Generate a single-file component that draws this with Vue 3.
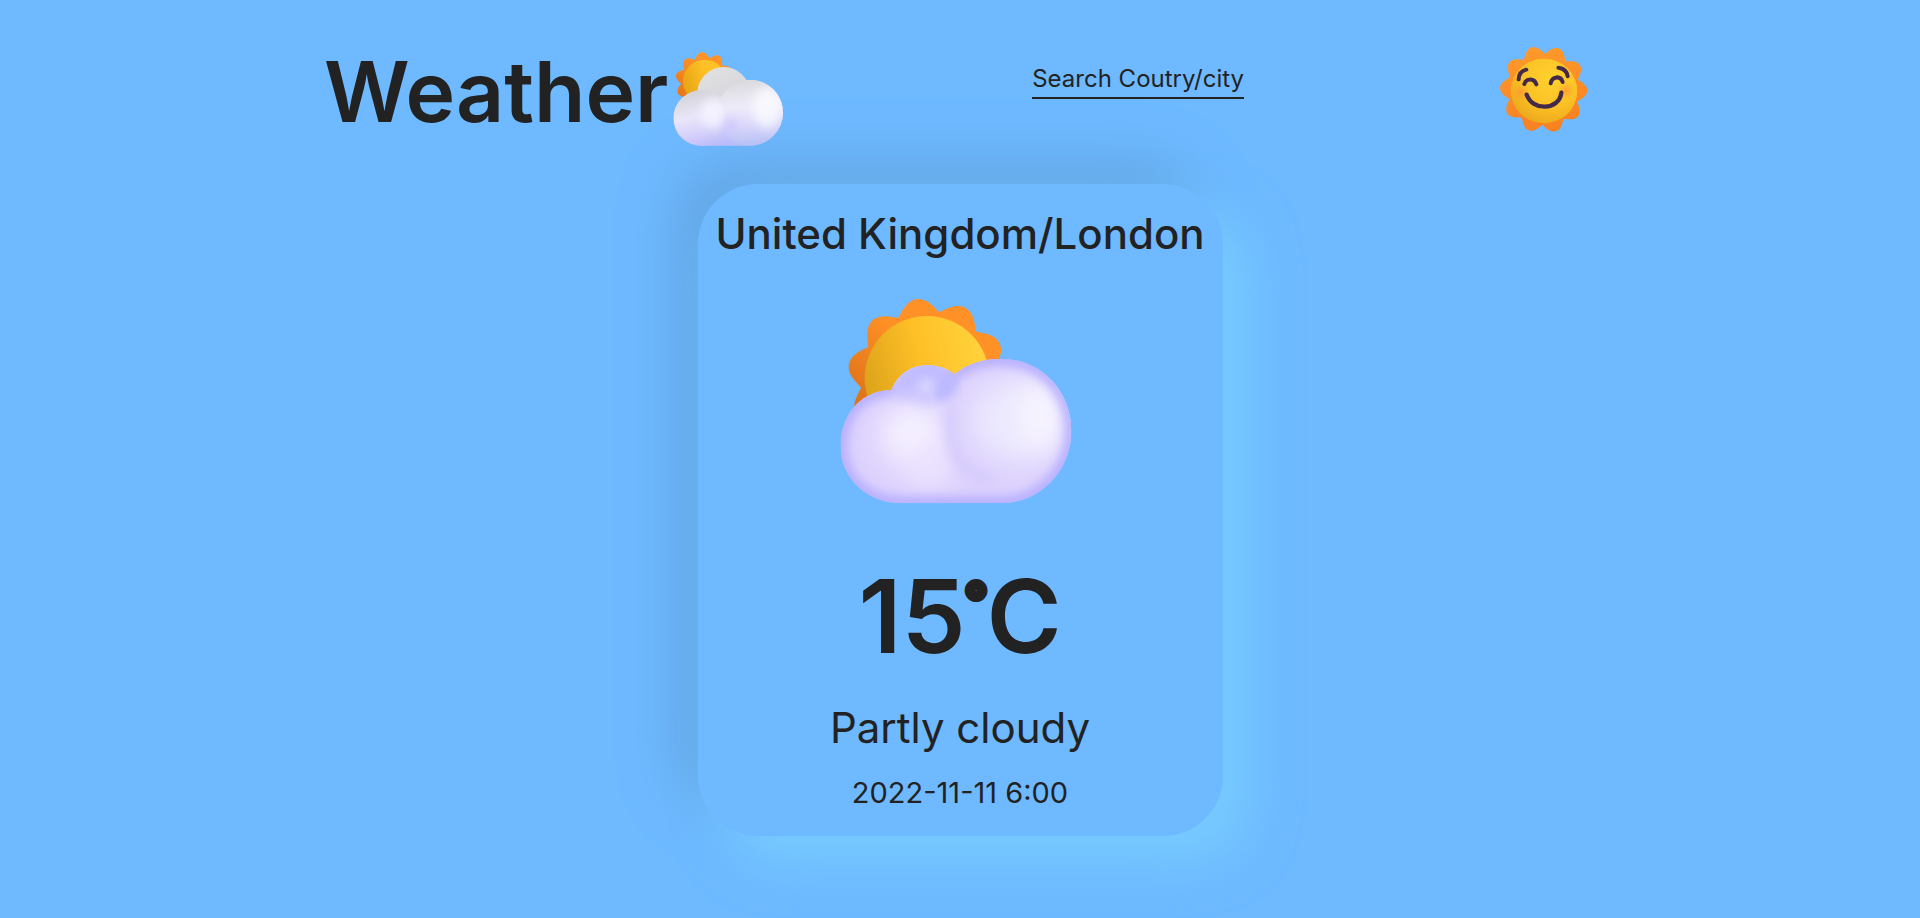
<script setup>
import { ref } from 'vue'

const query = ref('')

const weather = {
  place: 'United Kingdom/London',
  degrees: 15,
  condition: 'Partly cloudy',
  time: '2022-11-11 6:00',
}

// Ten rounded rays around a centre, as one closed outline.
function rays(cx, cy, valley, peak, turn) {
  const points = []
  for (let deg = 0; deg < 360; deg += 2) {
    const a = (deg * Math.PI) / 180
    const wave = 0.5 + 0.5 * Math.cos(10 * (a - (turn * Math.PI) / 180))
    const r = valley + (peak - valley) * Math.pow(wave, 0.6)
    points.push(`${(cx + r * Math.cos(a)).toFixed(1)} ${(cy + r * Math.sin(a)).toFixed(1)}`)
  }
  return `M${points.join('L')}Z`
}

const cardRays = rays(324, 295, 202, 240, -98)
const logoRays = rays(134, 124, 71, 88, -96)
const faceRays = rays(191, 178, 107, 131, 2)
</script>

<template>
  <div class="page">
    <header class="header">
      <h1 class="logo">
        <span>Weather</span>
        <svg class="logo-icon" viewBox="24 0 348 360" aria-hidden="true">
          <defs>
            <linearGradient id="lRay" x1="0" y1="1" x2="1" y2="0">
              <stop offset="0" stop-color="#e06c12" />
              <stop offset="0.6" stop-color="#ff9326" />
            </linearGradient>
            <linearGradient id="lSun" x1="0" y1="0.6" x2="1" y2="0.3">
              <stop offset="0" stop-color="#e6a516" />
              <stop offset="0.6" stop-color="#ffc226" />
            </linearGradient>
            <linearGradient id="lBack" x1="0" y1="0" x2="0.5" y2="1">
              <stop offset="0" stop-color="#e2e2e3" />
              <stop offset="0.6" stop-color="#d9d8dd" />
            </linearGradient>
            <linearGradient id="lLeft" gradientUnits="userSpaceOnUse" x1="95" y1="155" x2="130" y2="318">
              <stop offset="0" stop-color="#d3d3d8" />
              <stop offset="0.45" stop-color="#ebe7fa" />
              <stop offset="1" stop-color="#d3c4fd" />
            </linearGradient>
            <linearGradient id="lRight" gradientUnits="userSpaceOnUse" x1="235" y1="125" x2="260" y2="318">
              <stop offset="0" stop-color="#dbdbde" />
              <stop offset="0.4" stop-color="#efecfa" />
              <stop offset="1" stop-color="#d6c9fc" />
            </linearGradient>
            <clipPath id="lCloud">
              <circle cx="124" cy="234" r="84" />
              <circle cx="270" cy="218" r="99" />
              <rect x="122" y="230" width="150" height="87" />
            </clipPath>
            <filter id="lBlur" x="-80%" y="-80%" width="260%" height="260%">
              <feGaussianBlur stdDeviation="14" />
            </filter>
            <filter id="lEdge" x="-20%" y="-20%" width="140%" height="140%">
              <feGaussianBlur stdDeviation="5" />
            </filter>
          </defs>
          <path :d="logoRays" fill="url(#lRay)" />
          <circle cx="134" cy="124" r="65" fill="url(#lSun)" />
          <circle cx="191" cy="160" r="79" fill="url(#lBack)" />
          <g clip-path="url(#lCloud)">
            <rect x="30" y="110" width="350" height="220" fill="url(#lLeft)" />
            <ellipse cx="160" cy="222" rx="38" ry="44" fill="#f6f3fe" filter="url(#lBlur)" />
            <path d="M188 150Q182 190 202 240Q196 270 214 300L300 340L400 220L300 90Z" fill="url(#lRight)" filter="url(#lEdge)" />
            <ellipse cx="212" cy="255" rx="16" ry="24" fill="#d0c3fc" opacity="0.8" filter="url(#lBlur)" />
            <ellipse cx="322" cy="205" rx="44" ry="60" fill="#faf8fe" filter="url(#lBlur)" />
          </g>
        </svg>
      </h1>

      <form class="search" @submit.prevent>
        <input
          v-model="query"
          class="search-input"
          type="text"
          aria-label="Search Coutry/city"
          placeholder="Search Coutry/city"
        />
      </form>

      <svg class="face" viewBox="36 30 300 300" aria-hidden="true">
        <defs>
          <linearGradient id="fRay" x1="0.3" y1="0" x2="0.5" y2="1">
            <stop offset="0" stop-color="#ff9a2c" />
            <stop offset="1" stop-color="#f88020" />
          </linearGradient>
          <radialGradient id="fSun" cx="0.62" cy="0.3" r="0.8">
            <stop offset="0" stop-color="#ffd22f" />
            <stop offset="0.55" stop-color="#fbc125" />
            <stop offset="1" stop-color="#e9a31d" />
          </radialGradient>
          <radialGradient id="fCheek">
            <stop offset="0" stop-color="#ff8a35" stop-opacity="0.65" />
            <stop offset="1" stop-color="#ff9a35" stop-opacity="0" />
          </radialGradient>
        </defs>
        <path :d="faceRays" fill="url(#fRay)" />
        <ellipse cx="192" cy="183" rx="100" ry="97" fill="url(#fSun)" />
        <circle cx="123" cy="187" r="27" fill="url(#fCheek)" />
        <circle cx="258" cy="182" r="27" fill="url(#fCheek)" />
        <g fill="none" stroke="#44294a" stroke-width="12" stroke-linecap="round">
          <path d="M116 148Q117 124 139 119" />
          <path d="M235 113Q260 116 263 139" />
          <path d="M133 162C138 144 163 144 169 163" />
          <path d="M212 160C216 138 242 136 248 156" />
          <path d="M140 194C156 243 237 243 244 188" stroke-width="13" />
        </g>
      </svg>
    </header>

    <main class="card">
      <h2 class="place">{{ weather.place }}</h2>
      <svg class="card-icon" viewBox="16 0 810 720" role="img" :aria-label="weather.condition">
        <defs>
          <linearGradient id="cRay" gradientUnits="userSpaceOnUse" x1="90" y1="370" x2="350" y2="100">
            <stop offset="0" stop-color="#dc7018" />
            <stop offset="0.7" stop-color="#ff9126" />
          </linearGradient>
          <linearGradient id="cSun" gradientUnits="userSpaceOnUse" x1="135" y1="320" x2="500" y2="220">
            <stop offset="0" stop-color="#dca31b" />
            <stop offset="0.5" stop-color="#ffc027" />
            <stop offset="1" stop-color="#ffd33c" />
          </linearGradient>
          <clipPath id="cCloud">
            <path d="M250 670C135 670 63 590 63 498C63 400 128 330 215 330C245 252 335 232 405 282C440 253 490 236 542 236C665 236 755 334 755 453C755 574 660 670 542 670Z" />
          </clipPath>
          <filter id="soft" x="-50%" y="-50%" width="200%" height="200%">
            <feGaussianBlur stdDeviation="18" />
          </filter>
          <filter id="softer" x="-80%" y="-80%" width="260%" height="260%">
            <feGaussianBlur stdDeviation="40" />
          </filter>
        </defs>
        <path :d="cardRays" fill="url(#cRay)" />
        <circle cx="322" cy="295" r="187" fill="url(#cSun)" />
        <g clip-path="url(#cCloud)">
          <rect x="50" y="230" width="720" height="450" fill="#ddd2fd" />
          <path d="M205 345C240 230 350 200 420 290L370 365L300 365Z" fill="#c0bbff" filter="url(#soft)" />
          <ellipse cx="320" cy="318" rx="26" ry="22" fill="#dddaff" filter="url(#soft)" />
          <ellipse cx="280" cy="465" rx="100" ry="95" fill="#f5f0ff" filter="url(#softer)" />
          <ellipse cx="330" cy="560" rx="70" ry="70" fill="#ece3ff" filter="url(#softer)" />
          <ellipse cx="600" cy="420" rx="150" ry="130" fill="#ece8fe" filter="url(#softer)" />
          <ellipse cx="660" cy="405" rx="60" ry="100" fill="#f8f5ff" filter="url(#softer)" />
          <path d="M395 380Q385 490 430 560Q470 600 520 600" fill="none" stroke="#d5cbfc" stroke-width="34" filter="url(#soft)" />
          <path d="M405 292Q365 315 365 350Q385 345 405 310" fill="#b4b4ff" stroke="#b7b6ff" stroke-width="18" filter="url(#soft)" />
          <path d="M225 340Q285 335 335 372" fill="none" stroke="#cbc4ff" stroke-width="16" filter="url(#soft)" />
          <path
            d="M405 282C440 253 490 236 542 236C665 236 755 334 755 453C755 574 660 670 542 670H250C135 670 63 590 63 498C63 400 128 330 215 330"
            fill="none"
            stroke="#a9a2ff"
            stroke-width="30"
            filter="url(#soft)"
          />
        </g>
      </svg>
      <p class="temperature">{{ weather.degrees }}<span class="degree">°</span>C</p>
      <p class="condition">{{ weather.condition }}</p>
      <time class="time">{{ weather.time }}</time>
    </main>
  </div>
</template>

<style>
body {
  margin: 0;
  background: #6eb9ff;
}
</style>

<style scoped>
.page {
  min-height: 100vh;
  box-sizing: border-box;
  padding: 40px 20px 80px;
  display: flex;
  flex-direction: column;
  align-items: center;
  gap: 24px;
  background: #6eb9ff;
  color: #222;
  font-family: Inter, "Open Sans", sans-serif;
}

.header {
  width: 100%;
  max-width: 1280px;
  box-sizing: border-box;
  padding: 0 8px 0 4px;
  display: flex;
  justify-content: space-between;
  align-items: flex-start;
}

.logo {
  margin: 0;
  display: flex;
  align-items: flex-start;
  font-size: 84px;
  line-height: 104px;
  font-weight: 600;
}

.logo-icon {
  width: 116px;
  height: 120px;
}

.search {
  padding-top: 20px;
}

.search-input {
  display: block;
  width: 212px;
  height: 39px;
  box-sizing: border-box;
  padding: 0;
  border: 0;
  border-bottom: 2px solid #222;
  outline: 0;
  background: transparent;
  color: #222;
  font-family: inherit;
  font-size: 24px;
}

.search-input::placeholder {
  color: #222;
  opacity: 1;
}

.face {
  width: 100px;
  height: 100px;
}

.card {
  width: 100%;
  max-width: 525px;
  box-sizing: border-box;
  padding: 20px 16px 23px;
  display: flex;
  flex-direction: column;
  align-items: center;
  border-radius: 60px;
  background: #6eb9ff;
  box-shadow: 25px 25px 50px #77ccff, -25px -25px 50px #64a8e7;
  text-align: center;
}

.place {
  margin: 0 0 16px;
  font-size: 42px;
  line-height: 60px;
  font-weight: 500;
}

.card-icon {
  width: 270px;
  height: 240px;
}

.temperature {
  margin: 36px 0 22px;
  font-size: 102px;
  line-height: 120px;
  font-weight: 600;
}

.degree {
  margin: 0 3px;
  font-size: 32px;
  line-height: 1;
  vertical-align: 44px;
  -webkit-text-stroke: 12px #222;
}

.condition {
  margin: 0 0 15px;
  font-size: 42px;
  line-height: 60px;
}

.time {
  font-size: 29px;
  line-height: 40px;
}
</style>
